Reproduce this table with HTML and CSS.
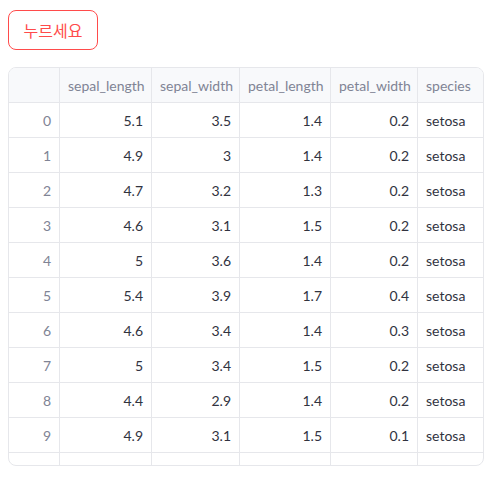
FILE: index.html
```html
<!DOCTYPE html>
<html>
<head>
<meta charset="utf-8">
<link rel="stylesheet" href="styles.css">
</head>
<body>
<div class="page">
  <button class="btn">누르세요</button>
  <div class="grid">
    <div class="row head">
      <div class="c idx"></div>
      <div class="c">sepal_length</div>
      <div class="c">sepal_width</div>
      <div class="c">petal_length</div>
      <div class="c">petal_width</div>
      <div class="c last">species</div>
    </div>
    <div class="row"><div class="c idx">0</div><div class="c num">5.1</div><div class="c num">3.5</div><div class="c num">1.4</div><div class="c num">0.2</div><div class="c last">setosa</div></div>
    <div class="row"><div class="c idx">1</div><div class="c num">4.9</div><div class="c num">3</div><div class="c num">1.4</div><div class="c num">0.2</div><div class="c last">setosa</div></div>
    <div class="row"><div class="c idx">2</div><div class="c num">4.7</div><div class="c num">3.2</div><div class="c num">1.3</div><div class="c num">0.2</div><div class="c last">setosa</div></div>
    <div class="row"><div class="c idx">3</div><div class="c num">4.6</div><div class="c num">3.1</div><div class="c num">1.5</div><div class="c num">0.2</div><div class="c last">setosa</div></div>
    <div class="row"><div class="c idx">4</div><div class="c num">5</div><div class="c num">3.6</div><div class="c num">1.4</div><div class="c num">0.2</div><div class="c last">setosa</div></div>
    <div class="row"><div class="c idx">5</div><div class="c num">5.4</div><div class="c num">3.9</div><div class="c num">1.7</div><div class="c num">0.4</div><div class="c last">setosa</div></div>
    <div class="row"><div class="c idx">6</div><div class="c num">4.6</div><div class="c num">3.4</div><div class="c num">1.4</div><div class="c num">0.3</div><div class="c last">setosa</div></div>
    <div class="row"><div class="c idx">7</div><div class="c num">5</div><div class="c num">3.4</div><div class="c num">1.5</div><div class="c num">0.2</div><div class="c last">setosa</div></div>
    <div class="row"><div class="c idx">8</div><div class="c num">4.4</div><div class="c num">2.9</div><div class="c num">1.4</div><div class="c num">0.2</div><div class="c last">setosa</div></div>
    <div class="row"><div class="c idx">9</div><div class="c num">4.9</div><div class="c num">3.1</div><div class="c num">1.5</div><div class="c num">0.1</div><div class="c last">setosa</div></div>
    <div class="row filler"><div class="c idx"></div><div class="c"></div><div class="c"></div><div class="c"></div><div class="c"></div><div class="c last"></div></div>
  </div>
</div>
</body>
</html>
```
FILE: styles.css
```css
html, body {
  margin: 0;
  padding: 0;
  background: #ffffff;
}
.page {
  padding: 10px 8px 0 8px;
  font-family: Lato, "Noto Sans", sans-serif;
  color: #31333f;
}
.btn {
  display: block;
  box-sizing: border-box;
  width: 90px;
  height: 40px;
  padding: 0;
  border: 1px solid #ff4b4b;
  border-radius: 8px;
  background: #ffffff;
  color: #ff4b4b;
  font-family: "Noto Sans CJK KR", sans-serif;
  font-size: 16px;
  line-height: 1;
  margin: 0 0 17px 0;
}
.grid {
  box-sizing: border-box;
  width: 476px;
  height: 399px;
  border: 1px solid #e6e7eb;
  border-radius: 8px;
  overflow: hidden;
  font-size: 14px;
}
.row {
  display: grid;
  grid-template-columns: 51px 92px 88px 91px 87px 65px;
  height: 35px;
}
.row.filler {
  height: 12px;
}
.row.filler .c {
  border-bottom: none;
}
.head {
  background: #f8f9fb;
}
.c {
  box-sizing: border-box;
  border-right: 1px solid #e6e7eb;
  border-bottom: 1px solid #e6e7eb;
  padding: 0 8px;
  display: flex;
  align-items: center;
  white-space: nowrap;
  overflow: hidden;
}
.c.last {
  border-right: none;
}
.head .c {
  color: #808495;
}
.num {
  justify-content: flex-end;
}
.idx {
  justify-content: flex-end;
  color: #808495;
}
```
